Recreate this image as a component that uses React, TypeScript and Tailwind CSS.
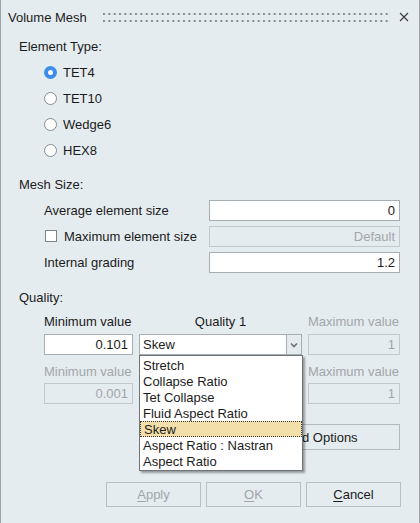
import React from "react";

const txt = "text-[13px] leading-[15px] text-[#1b1b1b]";
const dis = "text-[13px] leading-[15px] text-[#a2a6aa]";

function Radio({ checked, label }: { checked?: boolean; label: string }) {
  return (
    <div className="flex h-[26px] items-center pl-[43px]">
      {checked ? (
        <span className="flex h-[13px] w-[13px] items-center justify-center rounded-full bg-[#3d8ee8]">
          <span className="h-[5px] w-[5px] rounded-full bg-white" />
        </span>
      ) : (
        <span className="h-[13px] w-[13px] rounded-full border border-[#858a8e] bg-white" />
      )}
      <span className={`ml-[6px] ${txt}`}>{label}</span>
    </div>
  );
}

function Input({ value, disabled, w }: { value: string; disabled?: boolean; w: string }) {
  return (
    <div
      className={`${w} flex h-[21px] items-center justify-end border px-[4px] ${
        disabled ? "border-[#c3c8cc] bg-[#e5ecf0]" : "border-[#a7aeb3] bg-white"
      }`}
    >
      <span className={disabled ? dis : txt}>{value}</span>
    </div>
  );
}

const items = [
  "Stretch",
  "Collapse Ratio",
  "Tet Collapse",
  "Fluid Aspect Ratio",
  "Skew",
  "Aspect Ratio : Nastran",
  "Aspect Ratio",
];

export default function App() {
  return (
    <div className="relative h-[523px] w-[420px] border-x border-[#9ea3a7] bg-[#e5ecf0] font-['Liberation_Sans',Arial,sans-serif]">
      {/* title bar */}
      <div className="flex h-[34px] items-center pl-[7px] pr-[10px]">
        <span className={txt}>Volume Mesh</span>
        <svg className="ml-[16px] mt-[2px]" width="286" height="10" viewBox="0 0 286 10">
          <defs>
            <pattern id="dots" x="0" y="0" width="5.333" height="7" patternUnits="userSpaceOnUse">
              <rect x="0" y="0" width="2" height="2" fill="#858c92" />
            </pattern>
          </defs>
          <rect x="0" y="0" width="286" height="10" fill="url(#dots)" />
        </svg>
        <svg className="ml-auto" width="10" height="10" viewBox="0 0 10 10">
          <path d="M1 1 L9 9 M9 1 L1 9" stroke="#3a3a3a" strokeWidth="1.1" />
        </svg>
      </div>

      {/* Element type */}
      <div className={`flex h-[24px] items-center pl-[18px] ${txt}`}>Element Type:</div>
      <div className="mt-[1px]">
        <Radio checked label="TET4" />
        <Radio label="TET10" />
        <Radio label="Wedge6" />
        <Radio label="HEX8" />
      </div>

      {/* Mesh size */}
      <div className={`mt-[8px] flex h-[26px] items-center pl-[18px] ${txt}`}>Mesh Size:</div>
      <div className="flex h-[26px] items-center pl-[43px] pr-[19px]">
        <span className={`flex-1 ${txt}`}>Average element size</span>
        <Input w="w-[191px]" value="0" />
      </div>
      <div className="flex h-[26px] items-center pl-[44px] pr-[19px]">
        <span className="h-[12px] w-[12px] border border-[#7e8488] bg-white" />
        <span className={`ml-[7px] flex-1 ${txt}`}>Maximum element size</span>
        <Input w="w-[191px]" value="Default" disabled />
      </div>
      <div className="flex h-[26px] items-center pl-[43px] pr-[19px]">
        <span className={`flex-1 ${txt}`}>Internal grading</span>
        <Input w="w-[191px]" value="1.2" />
      </div>

      {/* Quality */}
      <div className={`mt-[9px] flex h-[26px] items-center pl-[18px] ${txt}`}>Quality:</div>
      <div className="flex h-[22px] items-center gap-[6px] pl-[43px]">
        <span className={`w-[89px] ${txt}`}>Minimum value</span>
        <span className={`w-[163px] text-center ${txt}`}>Quality 1</span>
        <span className={`w-[92px] ${dis}`}>Maximum value</span>
      </div>
      <div className="mt-[2px] flex items-center gap-[6px] pl-[43px]">
        <Input w="w-[89px]" value="0.101" />
        <div className="relative w-[163px]">
          <div className="flex h-[21px] border border-[#a7aeb3] bg-white">
            <span className={`flex flex-1 items-center pl-[3px] ${txt}`}>Skew</span>
            <span className="flex w-[15px] items-center justify-center border-l border-[#a7aeb3] bg-[#e5ecf0]">
              <svg width="8" height="6" viewBox="0 0 8 6">
                <path d="M1 1.5 L4 4.5 L7 1.5" fill="none" stroke="#6a6f73" strokeWidth="1.6" />
              </svg>
            </span>
          </div>
          {/* dropdown list */}
          <div className="absolute left-0 top-[21px] z-10 w-[164px] border border-[#6f7478] bg-white py-[1px] shadow-[2px_2px_2px_rgba(0,0,0,0.35)]">
            {items.map((it) => (
              <div
                key={it}
                className={`flex h-[16px] items-center pl-[3px] ${txt} ${
                  it === "Skew" ? "border border-dotted border-[#3a3a3a] bg-[#f3dfa9] pl-[2px]" : ""
                }`}
              >
                {it}
              </div>
            ))}
          </div>
        </div>
        <Input w="w-[92px]" value="1" disabled />
      </div>
      <div className="mt-[5px] flex h-[22px] items-center gap-[6px] pl-[43px]">
        <span className={`w-[89px] ${dis}`}>Minimum value</span>
        <span className="w-[163px]" />
        <span className={`w-[92px] ${dis}`}>Maximum value</span>
      </div>
      <div className="mt-[1px] flex items-center gap-[6px] pl-[43px]">
        <Input w="w-[89px]" value="0.001" disabled />
        <span className="w-[163px]" />
        <Input w="w-[92px]" value="1" disabled />
      </div>
      <div className="mt-[20px] flex justify-end pr-[19px]">
        <div className={`flex h-[26px] w-[191px] items-center justify-center border border-[#b3babf] bg-[#e5ecf0] ${txt}`}>
          Advanced Options
        </div>
      </div>

      {/* buttons */}
      <div className="mt-[32px] flex justify-end gap-[5px] pr-[18px]">
        <div className={`flex h-[25px] w-[95px] items-center justify-center border border-[#b9c0c5] ${dis}`}>
          <span className="underline underline-offset-[2px]">A</span>pply
        </div>
        <div className={`flex h-[25px] w-[95px] items-center justify-center border border-[#b9c0c5] ${dis}`}>
          <span className="underline underline-offset-[2px]">O</span>K
        </div>
        <div className={`flex h-[25px] w-[95px] items-center justify-center border border-[#b9c0c5] ${txt}`}>
          <span className="underline underline-offset-[2px]">C</span>ancel
        </div>
      </div>
    </div>
  );
}
